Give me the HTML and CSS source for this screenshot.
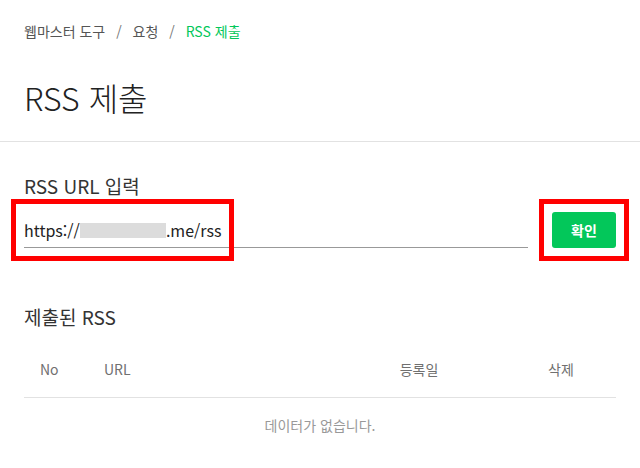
FILE: index.html
```html
<!DOCTYPE html>
<html lang="ko">
<head>
  <meta charset="UTF-8">
  <meta name="viewport" content="width=device-width,initial-scale=1.0">
  <title>RSS 제출</title>
  <link rel="stylesheet" href="styles.css">
</head>
<body>
  <div class="page-head">
    <nav class="breadcrumb">
      <span>웹마스터 도구</span>
      <span class="sep">/</span>
      <span>요청</span>
      <span class="sep">/</span>
      <span class="current">RSS 제출</span>
    </nav>
    <h1 class="title">RSS 제출</h1>
  </div>

  <div class="content">
    <h2 class="section-title">RSS URL 입력</h2>
    <div class="url-row">
      <div class="url-field">
        <span class="url-value">https://<span class="masked"></span>.me/rss</span>
      </div>
      <span class="btn-wrap"><button class="btn-ok" type="button">확인</button></span>
    </div>

    <h2 class="section-title list-title">제출된 RSS</h2>
    <div class="rss-table">
      <div class="table-head">
        <span class="col-no">No</span>
        <span class="col-url">URL</span>
        <span class="col-date">등록일</span>
        <span class="col-del">삭제</span>
      </div>
      <div class="table-empty">데이터가 없습니다.</div>
    </div>
  </div>
</body>
</html>
```

FILE: styles.css
```css
body {
  margin: 0;
  font-family: "Noto Sans CJK KR", "Noto Sans", sans-serif;
  color: #222;
  background: #fff;
}
.page-head {
  padding: 21px 24px 22px;
  border-bottom: 1px solid #e2e2e2;
}
.breadcrumb {
  font-size: 14px;
  line-height: 20px;
  color: #555;
}
.breadcrumb .sep {
  margin: 0 7px;
  color: #777;
}
.breadcrumb .current {
  color: #03c75a;
}
.title {
  margin: 34px 0 0;
  font-size: 32px;
  line-height: 44px;
  font-weight: 300;
  color: #222;
}
.content {
  padding: 0 24px;
}
.section-title {
  margin: 30px 0 0;
  font-size: 19px;
  line-height: 28px;
  font-weight: 400;
  color: #333;
}
.url-row {
  display: flex;
  gap: 24px;
  margin-top: 12px;
}
.url-field {
  flex: 1;
  height: 35px;
  border-bottom: 1px solid #999;
}
.url-value {
  display: inline-flex;
  align-items: center;
  height: 36px;
  font-size: 16px;
  color: #222;
  outline: 5px solid #f00;
  outline-offset: 8px;
}
.masked {
  display: inline-block;
  width: 86px;
  height: 15px;
  background: #dcdcdc;
}
.btn-wrap {
  display: flex;
  outline: 5px solid #f00;
  outline-offset: 8px;
}
.btn-ok {
  width: 64px;
  height: 36px;
  border: none;
  border-radius: 3px;
  background: #03c75a;
  color: #fff;
  font-family: inherit;
  font-size: 14px;
  font-weight: 700;
}
.list-title {
  margin-top: 55px;
}
.table-head {
  display: grid;
  grid-template-columns: 80px 1fr 174px 110px;
  padding: 28px 0 18px;
  border-bottom: 1px solid #e2e2e2;
  font-size: 14px;
  line-height: 20px;
  color: #707070;
}
.col-no {
  padding-left: 16px;
}
.col-date, .col-del {
  text-align: center;
}
.table-empty {
  padding-top: 17px;
  text-align: center;
  font-size: 14px;
  line-height: 20px;
  color: #999;
}
```
